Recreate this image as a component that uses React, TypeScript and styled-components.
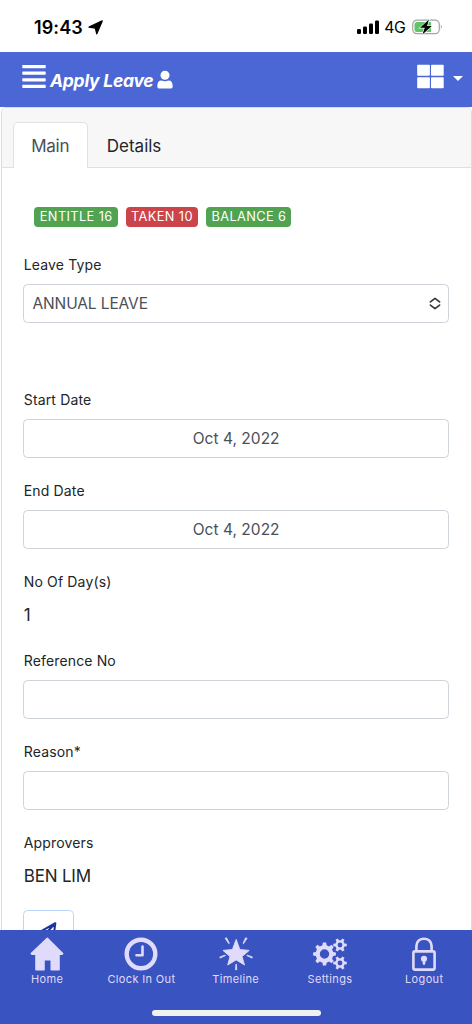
import React from "react";
import styled, { createGlobalStyle } from "styled-components";

const GlobalStyle = createGlobalStyle`
  * { box-sizing: border-box; }
  body { margin: 0; background: #fff; }
  button, input { font: inherit; }
`;

const Screen = styled.div`
  width: 472px;
  height: 1024px;
  display: flex;
  flex-direction: column;
  overflow: hidden;
  background: #fff;
  color: #212529;
  font-family: Inter, "Liberation Sans", sans-serif;
`;

const StatusBar = styled.div`
  flex: none;
  height: 52px;
  padding: 2px 29.5px 0 34px;
  display: flex;
  align-items: center;
  justify-content: space-between;
  color: #000;
`;

const StatusGroup = styled.div`
  display: flex;
  align-items: center;
`;

const Clock = styled.span`
  font-size: 18px;
  font-weight: 600;
  letter-spacing: 0.1px;
  margin-right: 5px;
`;

const Network = styled.span`
  font-size: 15.8px;
  font-weight: 400;
  letter-spacing: -0.4px;
  margin: 0 6px 0 5.5px;
`;

const Header = styled.header`
  flex: none;
  height: 55px;
  padding: 0 9px 0 22px;
  display: flex;
  justify-content: space-between;
  background: #4b67d6;
  color: #fff;
`;

const HeaderGroup = styled.div`
  display: flex;
  align-items: flex-start;
  padding-top: 12px;
`;

const Title = styled.h1`
  margin: 6px 3.5px 0 4px;
  font-size: 17.5px;
  line-height: 22px;
  font-weight: 700;
  font-style: italic;
  letter-spacing: -0.25px;
`;

const UserMark = styled.span`
  margin-top: 6px;
  line-height: 0;
`;

const Caret = styled.span`
  margin: 12px 0 0 9px;
  border: 5px solid transparent;
  border-top-color: #fff;
  border-bottom: 0;
`;

const Main = styled.main`
  flex: 1;
  min-height: 0;
  overflow: hidden;
`;

const Card = styled.section`
  height: 900px;
  margin: 0 0 0 1px;
  border: 1px solid #dcdcdd;
  border-radius: 5px 5px 0 0;
`;

const Tabs = styled.nav`
  height: 60px;
  padding: 14px 10px 0 10.5px;
  display: flex;
  background: #f7f7f7;
  border-bottom: 1px solid #dee0e2;
  border-radius: 4px 4px 0 0;
`;

const Tab = styled.button<{ $active?: boolean }>`
  height: 46px;
  padding: 0 17.8px;
  border: 1px solid ${(p) => (p.$active ? "#dee2e6" : "transparent")};
  border-bottom: 0;
  border-radius: 5px 5px 0 0;
  background: ${(p) => (p.$active ? "#fff" : "transparent")};
  color: ${(p) => (p.$active ? "#495057" : "#212529")};
  font-size: 17px;
  letter-spacing: -0.3px;

  & + & {
    letter-spacing: 0;
  }
`;

const Form = styled.form`
  padding: 38.5px 22px 0 21.3px;
`;

const Badges = styled.div`
  display: flex;
  gap: 8px;
  padding-left: 11px;
  margin-bottom: 27px;
`;

const Badge = styled.span<{ $tone: "green" | "red" }>`
  height: 20.4px;
  padding: 0 5px 0 5.5px;
  border-radius: 4px;
  background: ${(p) => (p.$tone === "green" ? "#51a351" : "#cb444a")};
  color: #fff;
  font-size: 12.8px;
  line-height: 20px;
  letter-spacing: 0.38px;
  white-space: nowrap;
`;

const FieldBox = styled.div<{ $gap?: number }>`
  display: flex;
  flex-direction: column;
  margin-bottom: ${(p) => p.$gap ?? 22}px;
`;

const Label = styled.label`
  height: 21px;
  margin-bottom: 9px;
  padding-left: 0.5px;
  font-size: 14px;
  line-height: 21px;
  letter-spacing: 0.14px;
`;

const control = `
  width: 100%;
  height: 39.2px;
  border: 1px solid #ced4da;
  border-radius: 4.5px;
  background: #fff;
  color: #495057;
  font-size: 15.5px;
`;

const Input = styled.input`
  ${control}
  padding: 0 8px;
  text-align: center;
  letter-spacing: 0.03px;
  outline: none;
`;

const Select = styled.div`
  ${control}
  display: flex;
  align-items: center;
  justify-content: space-between;
  padding: 0 7.5px 0 8.2px;
  letter-spacing: -0.12px;
`;

const Value = styled.div`
  height: 26.2px;
  padding-left: 0.5px;
  font-size: 17px;
  line-height: 28.2px;
  letter-spacing: -0.2px;
`;

const SendButton = styled.button`
  width: 51px;
  height: 42px;
  padding: 11px 2px 0 0;
  border: 1.5px solid #bcd6fb;
  border-radius: 4.5px;
  background: #fff;
  color: #1a34a8;
  display: flex;
  justify-content: center;
  align-items: flex-start;
`;

const BottomBar = styled.footer`
  flex: none;
  height: 94px;
  display: flex;
  flex-direction: column;
  background: #3953c1;
  color: #e0dbfa;
`;

const BottomNav = styled.nav`
  width: 471.4px;
  height: 80px;
  display: grid;
  grid-template-columns: repeat(5, 1fr);
`;

const NavItem = styled.div`
  display: flex;
  flex-direction: column;
  align-items: center;
  padding-top: 7px;
  font-size: 11px;
  line-height: 16px;
  letter-spacing: 0.35px;
  white-space: nowrap;
`;

const HomeIndicator = styled.div`
  width: 169px;
  height: 6px;
  margin: 0 auto;
  border-radius: 3px;
  background: #f1f0f0;
`;

function gearPath(cx: number, cy: number, r: number, root: number, teeth: number, hole: number, turn = 0) {
  const step = (Math.PI * 2) / teeth;
  const pts: string[] = [];
  for (let i = 0; i < teeth; i++) {
    const a = i * step + turn;
    const corners: [number, number][] = [
      [root, -0.3],
      [r, -0.18],
      [r, 0.18],
      [root, 0.3],
    ];
    corners.forEach(([rad, off]) => {
      const t = a + off * step;
      pts.push(`${(cx + rad * Math.cos(t)).toFixed(2)} ${(cy + rad * Math.sin(t)).toFixed(2)}`);
    });
  }
  return `M${pts.join("L")}ZM${cx - hole} ${cy}a${hole} ${hole} 0 1 0 ${hole * 2} 0a${hole} ${hole} 0 1 0 ${-hole * 2} 0Z`;
}

const HomeIcon = () => (
  <svg width="34" height="34" viewBox="0 0 34 34" fill="currentColor" stroke="currentColor" strokeWidth="1.6" strokeLinejoin="round">
    <path d="M17.3 1.4 32.6 16.5 32 17.2H29V32.7H21.3V22.8H14V32.7H6V17.2H2L1.3 16.5Z" />
  </svg>
);

const ClockIcon = () => (
  <svg width="34" height="34" viewBox="0 0 34 34" fill="none" stroke="currentColor">
    <circle cx="17" cy="17" r="14.3" strokeWidth="4.4" />
    <path d="M18.5 9.6V18.3H12.5" strokeWidth="2.6" strokeLinecap="round" strokeLinejoin="round" />
  </svg>
);

const StarIcon = () => (
  <svg width="34" height="34" viewBox="0 0 34 34" fill="currentColor" stroke="currentColor" strokeLinejoin="round">
    <path d="M17.2 2.4 20.8 12.5 30.2 13.4 23 19.6 25.5 28 17.2 22.9 8.7 28 11 19.6 4 13.4 13.4 12.5Z" strokeWidth="0.9" />
    <path d="M6.1 1.3 7.6 .8 10.3 6.3 9.8 6.7ZM28.1 1.3 26.6 .8 24 6.3 24.5 6.7ZM.8 19.9 6.2 18.1 6.4 18.6 1.2 21.1ZM33.4 19.9 28 18.1 27.8 18.6 33 21.1ZM16.9 27.2H17.4L17.8 32.8H16.5Z" strokeWidth="0.8" />
  </svg>
);

const GearsIcon = () => (
  <svg width="34" height="34" viewBox="0 0 34 34" fill="currentColor" fillRule="evenodd">
    <path d={gearPath(11.5, 17, 11.5, 8.9, 8, 4.7)} />
    <path d={gearPath(27, 8, 6.9, 4.8, 6, 2.4)} />
    <path d={gearPath(27, 26, 6.9, 4.8, 6, 2.4)} />
  </svg>
);

const LockIcon = () => (
  <svg width="34" height="34" viewBox="0 0 34 34" fill="none" stroke="currentColor">
    <rect x="6.4" y="14.4" width="21.2" height="18.2" rx="1.5" strokeWidth="2.6" />
    <path d="M9.4 14V9C9.4-.6 24.6-.6 24.6 9V14" strokeWidth="2.6" />
    <circle cx="17" cy="21.8" r="3.1" fill="currentColor" stroke="none" />
    <path d="M17 23V26.6" strokeWidth="2.6" strokeLinecap="round" />
  </svg>
);

const navItems = [
  { label: "Home", Icon: HomeIcon },
  { label: "Clock In Out", Icon: ClockIcon },
  { label: "Timeline", Icon: StarIcon },
  { label: "Settings", Icon: GearsIcon },
  { label: "Logout", Icon: LockIcon },
];

interface FieldProps {
  label: string;
  value?: string;
}

const InputField = ({ label, value = "" }: FieldProps) => (
  <FieldBox>
    <Label>{label}</Label>
    <Input defaultValue={value} aria-label={label} />
  </FieldBox>
);

const TextField = ({ label, value }: FieldProps) => (
  <FieldBox>
    <Label>{label}</Label>
    <Value>{value}</Value>
  </FieldBox>
);

export default function App() {
  return (
    <Screen>
      <GlobalStyle />
      <StatusBar>
        <StatusGroup>
          <Clock>19:43</Clock>
          <svg width="15" height="15" viewBox="0 0 15 15">
            <path d="M14.2 .9 8.8 13.8 7.3 8.1 1 7.2Z" stroke="#000" strokeWidth="1.3" strokeLinejoin="round" />
          </svg>
        </StatusGroup>
        <StatusGroup>
          <svg width="22" height="14" viewBox="0 0 22 14">
            <rect x="0" y="9" width="4" height="5" rx="1.2" />
            <rect x="6" y="6.5" width="4" height="7.5" rx="1.2" />
            <rect x="12" y="3.5" width="4" height="10.5" rx="1.2" />
            <rect x="18" y="0.5" width="4" height="13.5" rx="1.2" />
          </svg>
          <Network>4G</Network>
          <svg width="31" height="16" viewBox="0 0 31 16">
            <rect x="0.7" y="1.1" width="26.6" height="13.6" rx="4.2" fill="#fff" stroke="#a4a4a4" strokeWidth="1.2" />
            <path d="M5 3H19V13H5Q2.5 13 2.5 10.5V5.5Q2.5 3 5 3Z" fill="#62c466" />
            <path d="M28.8 5.8Q31 7.8 28.8 10Z" fill="#a4a4a4" />
            <path d="M17 .6 8 8.8H12.8L10.4 15.4 19.8 7H15Z" fill="#000" stroke="#fff" strokeWidth="1.2" paintOrder="stroke" />
          </svg>
        </StatusGroup>
      </StatusBar>

      <Header>
        <HeaderGroup>
          <svg width="24" height="25" viewBox="0 0 24 25" fill="#fff">
            <rect x="0.3" y="1" width="23.4" height="3.2" rx="0.6" />
            <rect x="0.3" y="7.5" width="23.4" height="3.2" rx="0.6" />
            <rect x="0.3" y="14.2" width="23.4" height="3.2" rx="0.6" />
            <rect x="0.3" y="20.8" width="23.4" height="3.2" rx="0.6" />
          </svg>
          <Title>Apply Leave</Title>
          <UserMark>
            <svg width="16" height="19" viewBox="0 0 16 19" fill="#fff">
              <circle cx="8" cy="5.2" r="4.5" />
              <path d="M.3 16.5C.3 12.5 1.7 10.6 4.5 10.6 6.7 11.4 9.3 11.4 11.5 10.6 14.3 10.6 15.7 12.5 15.7 16.5Q15.7 18.5 14 18.5H2Q.3 18.5 .3 16.5Z" />
            </svg>
          </UserMark>
        </HeaderGroup>
        <HeaderGroup>
          <svg width="27" height="25" viewBox="0 0 27 25" fill="#fff">
            <rect x="0.2" y="0.8" width="12.7" height="11" rx="0.8" />
            <rect x="14" y="0.8" width="12.7" height="11" rx="0.8" />
            <rect x="0.2" y="13.2" width="12.7" height="11" rx="0.8" />
            <rect x="14" y="13.2" width="12.7" height="11" rx="0.8" />
          </svg>
          <Caret />
        </HeaderGroup>
      </Header>

      <Main>
        <Card>
          <Tabs>
            <Tab $active>Main</Tab>
            <Tab>Details</Tab>
          </Tabs>
          <Form>
            <Badges>
              <Badge $tone="green">ENTITLE 16</Badge>
              <Badge $tone="red">TAKEN 10</Badge>
              <Badge $tone="green">BALANCE 6</Badge>
            </Badges>
            <FieldBox $gap={66}>
              <Label>Leave Type</Label>
              <Select>
                ANNUAL LEAVE
                <svg width="12" height="13" viewBox="0 0 12 13" fill="none" stroke="#343a40" strokeWidth="1.7" strokeLinecap="round" strokeLinejoin="round">
                  <path d="M1.4 4.9 6 1.3 10.6 4.9M1.4 8.1 6 11.7 10.6 8.1" />
                </svg>
              </Select>
            </FieldBox>
            <InputField label="Start Date" value="Oct 4, 2022" />
            <InputField label="End Date" value="Oct 4, 2022" />
            <TextField label="No Of Day(s)" value="1" />
            <InputField label="Reference No" />
            <InputField label="Reason*" />
            <TextField label="Approvers" value="BEN LIM" />
            <SendButton type="button" aria-label="Send">
              <svg width="18" height="18" viewBox="0 0 18 18" fill="none" stroke="currentColor" strokeWidth="2.1" strokeLinejoin="round">
                <path d="M16.3 1.2 1.8 9.4 6.2 11.5 14.3 16.5ZM16.3 1.2 6.6 11.5V16.5L9 13.7" />
              </svg>
            </SendButton>
          </Form>
        </Card>
      </Main>

      <BottomBar>
        <BottomNav>
          {navItems.map(({ label, Icon }) => (
            <NavItem key={label}>
              <Icon />
              {label}
            </NavItem>
          ))}
        </BottomNav>
        <HomeIndicator />
      </BottomBar>
    </Screen>
  );
}
